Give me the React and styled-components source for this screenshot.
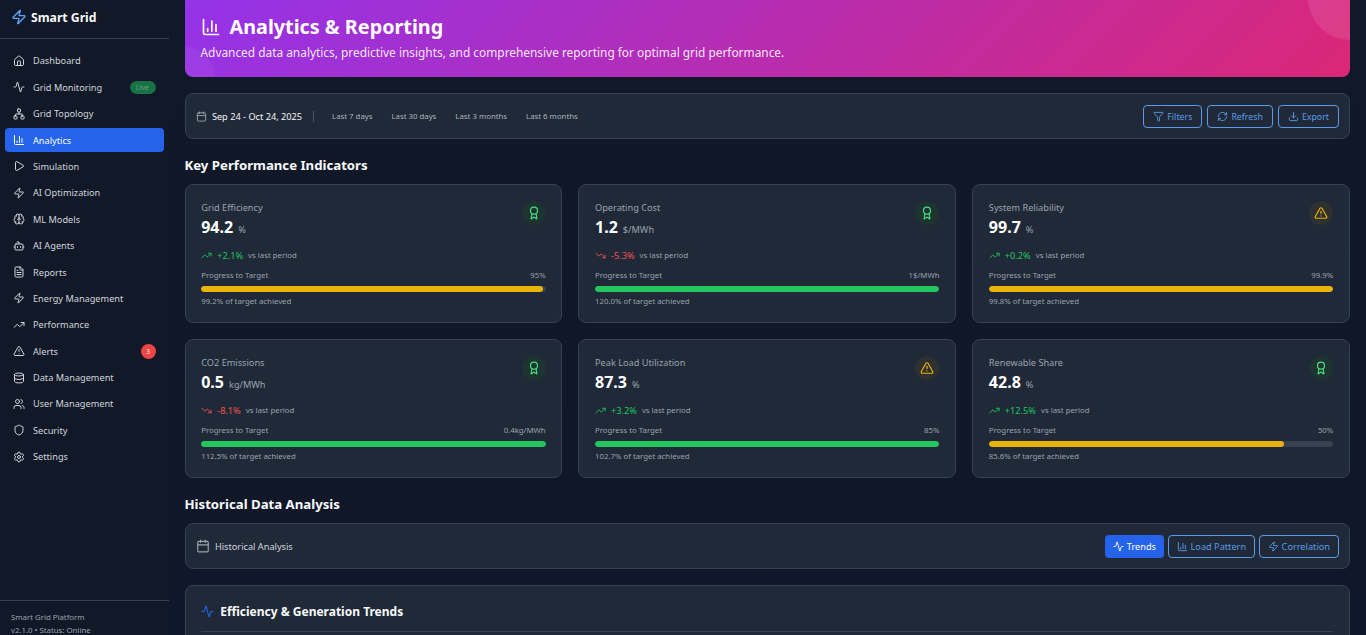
import React from 'react';
import styled, { createGlobalStyle } from 'styled-components';
import {
  Zap, House, Activity, Network, ChartColumn, Play, Brain, Bot, FileText, TrendingUp, TrendingDown,
  TriangleAlert, Database, Users, Shield, Settings, Calendar, Filter, RefreshCw, Download, Award,
} from 'lucide-react';

const Global = createGlobalStyle`
  html, body { margin: 0; padding: 0; height: 100%; overflow: hidden; background: #0f172a; }
  * { box-sizing: border-box; }
  body { font-family: "Noto Sans", "Liberation Sans", sans-serif; color: #e5e7eb; }
`;

const Shell = styled.div`
  display: flex;
  height: 635px;
  overflow: hidden;
  background: linear-gradient(180deg, #111827 0%, #0f172a 100%);
`;

const Sidebar = styled.aside`
  width: 168.5px;
  flex-shrink: 0;
  display: flex;
  flex-direction: column;
  height: 635px;
  background: #111827;
`;

const Brand = styled.div`
  height: 39px;
  flex-shrink: 0;
  display: flex;
  align-items: center;
  gap: 4px;
  padding: 0 11px 4px;
  border-bottom: 1px solid #374151;
  font-size: 12.2px;
  font-weight: 700;
  color: #f9fafb;
  svg { color: #60a5fa; }
`;

const Nav = styled.nav`
  flex: 1;
  display: flex;
  flex-direction: column;
  gap: 2.4px;
  padding: 9.88px 5px 0;
`;

const NavItem = styled.div`
  height: 24px;
  flex-shrink: 0;
  display: flex;
  align-items: center;
  gap: 8px;
  padding: 0 8px;
  border-radius: 4px;
  font-size: 9.2px;
  color: ${(p) => (p.$active ? '#ffffff' : '#d1d5db')};
  background: ${(p) => (p.$active ? '#2563eb' : 'transparent')};
  svg { flex-shrink: 0; }
`;

const NavLabel = styled.span`
  flex: 1;
  white-space: nowrap;
`;

const LiveBadge = styled.span`
  width: 26px;
  height: 13px;
  border-radius: 7px;
  background: #177245;
  color: #6b9d7c;
  font-size: 7.2px;
  display: flex;
  align-items: center;
  justify-content: center;
`;

const CountBadge = styled.span`
  width: 15px;
  height: 15px;
  border-radius: 50%;
  background: #ef4444;
  color: #fde2e2;
  font-size: 7.2px;
  display: flex;
  align-items: center;
  justify-content: center;
`;

const SideFooter = styled.div`
  height: 35px;
  flex-shrink: 0;
  padding: 10px 11px 0;
  border-top: 1px solid #374151;
  font-size: 7.8px;
  line-height: 13px;
  color: #9ca3af;
  white-space: nowrap;
`;

const Main = styled.main`
  flex: 1;
  min-width: 0;
  padding: 0 16px;
  overflow: hidden;
`;

const Hero = styled.header`
  position: relative;
  overflow: hidden;
  height: 89px;
  margin-top: -12px;
  margin-bottom: 16px;
  padding: 24px 16px 0;
  border-radius: 8px;
  background: linear-gradient(135deg, #9333ea 0%, #db2777 100%);
  color: #fff;
  &::before {
    content: '';
    position: absolute;
    top: -32px;
    right: -42px;
    width: 84px;
    height: 84px;
    border-radius: 50%;
    background: rgba(255, 255, 255, 0.1);
  }
  &::after {
    content: '';
    position: absolute;
    bottom: -30px;
    left: -30px;
    width: 60px;
    height: 60px;
    border-radius: 50%;
    background: rgba(255, 255, 255, 0.05);
  }
`;

const HeroTitle = styled.h1`
  margin: 0;
  display: flex;
  align-items: center;
  gap: 9px;
  font-size: 19.8px;
  line-height: 30px;
  font-weight: 700;
`;

const HeroText = styled.p`
  margin: 0;
  font-size: 11.88px;
  line-height: 20.6px;
  color: rgba(255, 255, 255, 0.9);
`;

const Toolbar = styled.div`
  height: 46px;
  display: flex;
  align-items: center;
  justify-content: space-between;
  padding: 0 10px 0 10.4px;
  background: #1f2937;
  border: 1px solid #374151;
  border-radius: 8px;
`;

const Row = styled.div`
  display: flex;
  align-items: center;
  gap: ${(p) => p.$gap || 5}px;
`;

const DateText = styled.span`
  font-size: 9.2px;
  color: #f3f4f6;
`;

const Divider = styled.span`
  width: 1px;
  height: 11px;
  background: #4b5563;
  margin: 0 13px 0 6px;
`;

const RangeLink = styled.span`
  font-size: 7.8px;
  color: #adb3bd;
  margin-right: 14px;
  white-space: nowrap;
`;

const ActionButton = styled.button`
  height: 23px;
  padding: ${(p) => (p.$size ? '0 8px' : '1px 9px 0')};
  display: flex;
  align-items: center;
  gap: 3px;
  font-family: inherit;
  font-size: ${(p) => p.$size || 8.8}px;
  border-radius: 4px;
  border: ${(p) => (p.$active ? 'none' : '1px solid #5b9be8')};
  background: ${(p) => (p.$active ? '#2563eb' : 'transparent')};
  color: ${(p) => (p.$active ? '#ffffff' : '#5b9be8')};
`;

const SectionTitle = styled.h2`
  margin: 17px 0 9px;
  font-size: 13.2px;
  line-height: 19px;
  font-weight: 700;
  color: #f9fafb;
`;

const KpiGrid = styled.div`
  display: grid;
  grid-template-columns: repeat(3, 1fr);
  gap: 16px;
`;

const Card = styled.section`
  height: 139px;
  padding: 16px 15.7px;
  background: #1f2937;
  border: 1px solid #374151;
  border-radius: 8px;
`;

const CardTop = styled.div`
  display: flex;
  justify-content: space-between;
  align-items: flex-start;
  height: 40px;
`;

const CardLabel = styled.div`
  font-size: 9.2px;
  line-height: 14px;
  color: #9ca3af;
`;

const ValueLine = styled.div`
  display: flex;
  align-items: baseline;
  gap: 5px;
  line-height: 24px;
`;

const Value = styled.span`
  font-size: 16px;
  font-weight: 700;
  color: #ffffff;
`;

const Unit = styled.span`
  font-size: 9.2px;
  color: #9ca3af;
`;

const IconChip = styled.div`
  width: 24px;
  height: 24px;
  border-radius: 50%;
  display: flex;
  align-items: center;
  justify-content: center;
  color: ${(p) => p.$color};
  background: ${(p) => (p.$warn ? '#2f3130' : '#1d3431')};
`;

const Trend = styled.div`
  display: flex;
  align-items: center;
  margin-top: 7px;
  height: 14px;
  gap: 5px;
  color: ${(p) => p.$color};
`;

const TrendValue = styled.span`
  font-size: 9.2px;
`;

const TrendNote = styled.span`
  font-size: 7.8px;
  color: #9ca3af;
`;

const ProgressHead = styled.div`
  display: flex;
  justify-content: space-between;
  margin-top: 8px;
  font-size: 7.8px;
  line-height: 11px;
  color: #9ca3af;
`;

const Track = styled.div`
  height: 6px;
  margin-top: 5px;
  border-radius: 3px;
  background: #374151;
  overflow: hidden;
`;

const Fill = styled.div`
  height: 100%;
  border-radius: 3px;
  background: ${(p) => p.$color};
`;

const Achieved = styled.div`
  margin-top: 3px;
  font-size: 7.8px;
  line-height: 12px;
  color: #9ca3af;
`;

const ChartCard = styled.section`
  margin-top: 16px;
  height: 120px;
  padding: 16px 15.7px;
  background: #1f2937;
  border: 1px solid #374151;
  border-radius: 8px 8px 0 0;
`;

const ChartTitle = styled.h3`
  margin: 0;
  height: 30px;
  padding-bottom: 10px;
  display: flex;
  align-items: center;
  gap: 6px;
  font-size: 12px;
  font-weight: 700;
  color: #f9fafb;
  border-bottom: 1px solid #374151;
  svg { color: #2563eb; }
`;

const HistoryLabel = styled.span`
  font-size: 9.2px;
  color: #d1d5db;
`;

const navItems = [
  ['Dashboard', House],
  ['Grid Monitoring', Activity, 'live'],
  ['Grid Topology', Network],
  ['Analytics', ChartColumn, 'active'],
  ['Simulation', Play],
  ['AI Optimization', Zap],
  ['ML Models', Brain],
  ['AI Agents', Bot],
  ['Reports', FileText],
  ['Energy Management', Zap],
  ['Performance', TrendingUp],
  ['Alerts', TriangleAlert, 'count'],
  ['Data Management', Database],
  ['User Management', Users],
  ['Security', Shield],
  ['Settings', Settings],
];

const GREEN = '#22c55e';
const YELLOW = '#eab308';
const RED = '#f05252';

const kpis = [
  { label: 'Grid Efficiency', value: '94.2', unit: '%', change: '+2.1%', up: true, target: '95%', pct: 99.2, note: '99.2% of target achieved', bar: YELLOW },
  { label: 'Operating Cost', value: '1.2', unit: '$/MWh', change: '-5.3%', up: false, target: '1$/MWh', pct: 100, note: '120.0% of target achieved', bar: GREEN },
  { label: 'System Reliability', value: '99.7', unit: '%', change: '+0.2%', up: true, target: '99.9%', pct: 99.8, note: '99.8% of target achieved', bar: YELLOW, warn: true },
  { label: 'CO2 Emissions', value: '0.5', unit: 'kg/MWh', change: '-8.1%', up: false, target: '0.4kg/MWh', pct: 100, note: '112.5% of target achieved', bar: GREEN },
  { label: 'Peak Load Utilization', value: '87.3', unit: '%', change: '+3.2%', up: true, target: '85%', pct: 100, note: '102.7% of target achieved', bar: GREEN, warn: true },
  { label: 'Renewable Share', value: '42.8', unit: '%', change: '+12.5%', up: true, target: '50%', pct: 85.6, note: '85.6% of target achieved', bar: YELLOW },
];

const KpiCard = ({ kpi }) => {
  const TrendIcon = kpi.up ? TrendingUp : TrendingDown;
  const ChipIcon = kpi.warn ? TriangleAlert : Award;
  return (
    <Card>
      <CardTop>
        <div>
          <CardLabel>{kpi.label}</CardLabel>
          <ValueLine>
            <Value>{kpi.value}</Value>
            <Unit>{kpi.unit}</Unit>
          </ValueLine>
        </div>
        <IconChip $warn={kpi.warn} $color={kpi.warn ? YELLOW : '#4ade80'}>
          <ChipIcon size={14} />
        </IconChip>
      </CardTop>
      <Trend $color={kpi.up ? GREEN : RED}>
        <TrendIcon size={11} />
        <TrendValue>{kpi.change}</TrendValue>
        <TrendNote>vs last period</TrendNote>
      </Trend>
      <ProgressHead>
        <span>Progress to Target</span>
        <span>{kpi.target}</span>
      </ProgressHead>
      <Track>
        <Fill $color={kpi.bar} style={{ width: `${kpi.pct}%` }} />
      </Track>
      <Achieved>{kpi.note}</Achieved>
    </Card>
  );
};

export default function App() {
  return (
    <>
      <Global />
      <Shell>
        <Sidebar>
          <Brand>
            <Zap size={16} />
            Smart Grid
          </Brand>
          <Nav>
            {navItems.map(([label, Icon, flag]) => (
              <NavItem key={label} $active={flag === 'active'}>
                <Icon size={12} />
                <NavLabel>{label}</NavLabel>
                {flag === 'live' && <LiveBadge>Live</LiveBadge>}
                {flag === 'count' && <CountBadge>3</CountBadge>}
              </NavItem>
            ))}
          </Nav>
          <SideFooter>
            <div>Smart Grid Platform</div>
            <div>v2.1.0 • Status: Online</div>
          </SideFooter>
        </Sidebar>
        <Main>
          <Hero>
            <HeroTitle>
              <ChartColumn size={20} />
              Analytics &amp; Reporting
            </HeroTitle>
            <HeroText>Advanced data analytics, predictive insights, and comprehensive reporting for optimal grid performance.</HeroText>
          </Hero>
          <Toolbar>
            <Row>
              <Calendar size={11} color="#9ca3af" />
              <DateText>Sep 24 - Oct 24, 2025</DateText>
              <Divider />
              <RangeLink>Last 7 days</RangeLink>
              <RangeLink>Last 30 days</RangeLink>
              <RangeLink>Last 3 months</RangeLink>
              <RangeLink>Last 6 months</RangeLink>
            </Row>
            <Row>
              <ActionButton><Filter size={11} />Filters</ActionButton>
              <ActionButton><RefreshCw size={11} />Refresh</ActionButton>
              <ActionButton><Download size={11} />Export</ActionButton>
            </Row>
          </Toolbar>
          <SectionTitle>Key Performance Indicators</SectionTitle>
          <KpiGrid>
            {kpis.map((k) => <KpiCard key={k.label} kpi={k} />)}
          </KpiGrid>
          <SectionTitle>Historical Data Analysis</SectionTitle>
          <Toolbar>
            <Row>
              <Calendar size={14} color="#9ca3af" />
              <HistoryLabel>Historical Analysis</HistoryLabel>
            </Row>
            <Row $gap={3.5}>
              <ActionButton $active $size={9.2}><Activity size={11} />Trends</ActionButton>
              <ActionButton $size={9.2}><ChartColumn size={11} />Load Pattern</ActionButton>
              <ActionButton $size={9.2}><Zap size={11} />Correlation</ActionButton>
            </Row>
          </Toolbar>
          <ChartCard>
            <ChartTitle><Activity size={13} />Efficiency &amp; Generation Trends</ChartTitle>
          </ChartCard>
        </Main>
      </Shell>
    </>
  );
}
